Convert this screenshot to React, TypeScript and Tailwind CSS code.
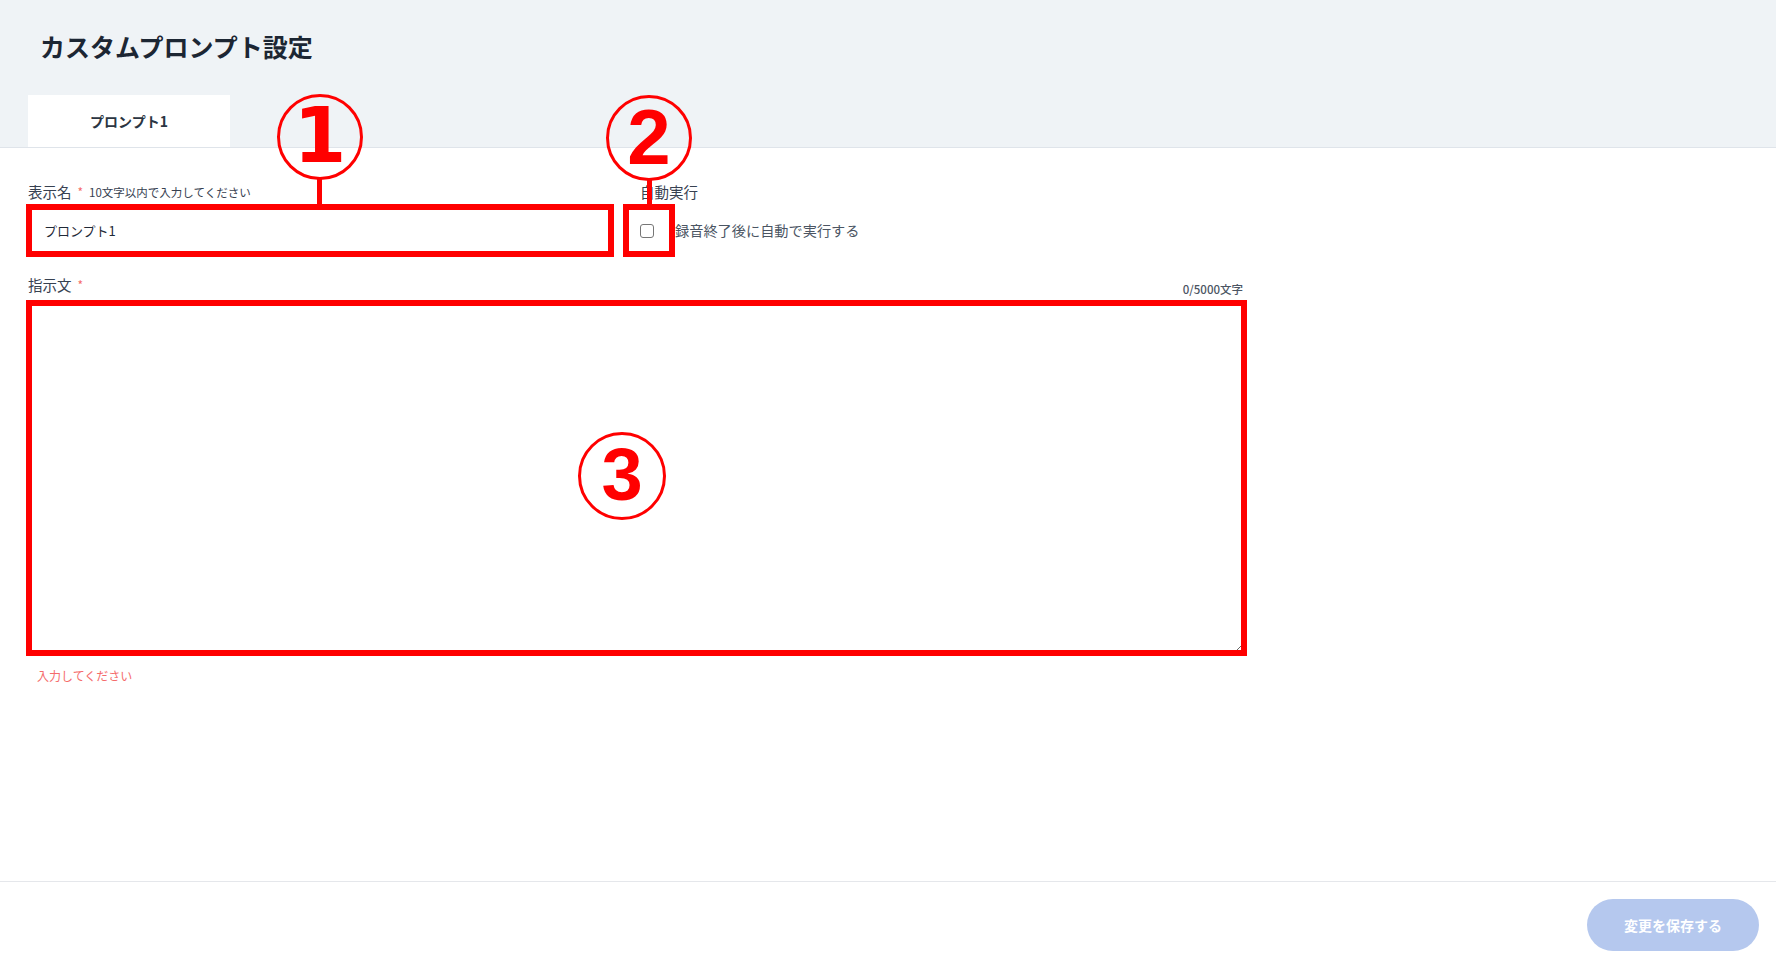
import { useState } from "react";

const circleMarks = [
  { n: "1", left: "left-[277px]", top: "top-[94px]", size: "w-[86px] h-[86px]", font: "font-['DejaVu_Sans',sans-serif] text-[76px]" },
  { n: "2", left: "left-[606px]", top: "top-[95px]", size: "w-[86px] h-[86px]", font: "font-['Liberation_Sans',sans-serif] text-[78px]" },
  { n: "3", left: "left-[578px]", top: "top-[432px]", size: "w-[88px] h-[88px]", font: "font-['Liberation_Sans',sans-serif] text-[74px]" },
];

function Annotations() {
  return (
    <div className="pointer-events-none absolute inset-0">
      {/* boxes */}
      <div className="absolute left-[26px] top-[204px] h-[53px] w-[588px] border-[6px] border-[#ff0000]" />
      <div className="absolute left-[623px] top-[204px] h-[53px] w-[52px] border-[6px] border-[#ff0000]" />
      <div className="absolute left-[26px] top-[300px] h-[356px] w-[1221px] border-[6px] border-[#ff0000]" />
      {/* leader lines */}
      <div className="absolute left-[317px] top-[179px] h-[26px] w-[5px] bg-[#ff0000]" />
      <div className="absolute left-[647px] top-[180px] h-[25px] w-[5px] bg-[#ff0000]" />
      {circleMarks.map((m) => (
        <div
          key={m.n}
          className={`absolute ${m.left} ${m.top} ${m.size} flex items-center justify-center rounded-full border-[3px] border-[#ff0000] bg-transparent`}
        >
          <span className={`${m.font} font-bold leading-none text-[#ff0000] -mt-[2px]`}>{m.n}</span>
        </div>
      ))}
    </div>
  );
}

export default function App() {
  const [name, setName] = useState("プロンプト1");
  const [prompt, setPrompt] = useState("");
  const [auto, setAuto] = useState(false);

  return (
    <div className="relative flex min-h-[967px] flex-col bg-white font-['Noto_Sans_CJK_JP','Noto_Sans',sans-serif]">
      <header className="border-b border-[#dfe4ea] bg-[#eff3f6]">
        <h1 className="pl-[40px] pt-[31px] text-[25px] font-bold leading-[30px] text-[#1c2633]">
          カスタムプロンプト設定
        </h1>
        <div className="mt-[34px] flex pl-[28px]">
          <button
            type="button"
            className="flex h-[52px] w-[202px] items-center justify-center bg-white text-[14px] font-semibold text-[#2b3542]"
          >
            プロンプト1
          </button>
        </div>
      </header>

      <main className="flex-1 px-[28px]">
        <div className="flex pt-[34px]">
          <div className="w-[584px]">
            <div className="flex h-[20px] items-center gap-[6px]">
              <span className="text-[14.5px] leading-[20px] text-[#374151]">表示名</span>
              <span className="text-[12px] text-[#f56c6c]">*</span>
              <span className="text-[11.5px] leading-[20px] text-[#374151]">10文字以内で入力してください</span>
            </div>
            <input
              value={name}
              onChange={(e) => setName(e.target.value)}
              className="mt-[4px] h-[49px] w-full rounded-[4px] border border-[#d1d5db] px-[15px] text-[13px] text-[#1f2937] outline-none"
            />
          </div>
          <div className="ml-[28px]">
            <div className="h-[20px] text-[14.5px] leading-[20px] text-[#374151]">自動実行</div>
            <label className="mt-[4px] flex h-[49px] items-center gap-[21px]">
              <input
                type="checkbox"
                checked={auto}
                onChange={(e) => setAuto(e.target.checked)}
                className="h-[14px] w-[14px] appearance-none rounded-[3px] border border-[#767676] bg-white"
              />
              <span className="pt-[1px] text-[14.2px] text-[#4b5563]">録音終了後に自動で実行する</span>
            </label>
          </div>
        </div>

        <div className="mt-[20px] flex w-[1217px] items-end justify-between">
          <div className="flex h-[20px] items-center gap-[6px]">
            <span className="text-[14.5px] leading-[20px] text-[#374151]">指示文</span>
            <span className="text-[12px] text-[#f56c6c]">*</span>
          </div>
          <span className="pr-[2px] text-[11.5px] font-medium leading-[16px] text-[#4b5563] -mb-[2px]">
            {prompt.length}/5000文字
          </span>
        </div>
        <textarea
          value={prompt}
          onChange={(e) => setPrompt(e.target.value)}
          className="mt-[7px] block h-[351px] w-[1217px] rounded-[4px] border border-[#d1d5db] p-[12px] text-[14px] outline-none"
        />
        <p className="mt-[15px] pl-[9px] text-[12px] leading-[16px] text-[#f56c6c]">入力してください</p>
      </main>

      <footer className="flex h-[86px] items-center justify-end border-t border-[#e5e7eb] pr-[17px]">
        <button
          type="button"
          disabled
          className="mt-[1px] h-[52px] w-[172px] rounded-full bg-[#b5c8ee] text-[14px] font-bold text-white"
        >
          変更を保存する
        </button>
      </footer>

      <Annotations />
    </div>
  );
}
